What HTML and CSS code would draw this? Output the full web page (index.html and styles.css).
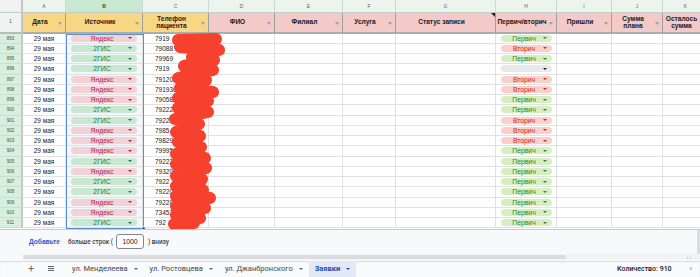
FILE: index.html
```html
<!DOCTYPE html>
<html lang="ru">
<head>
<meta charset="utf-8">
<link rel="stylesheet" href="styles.css">
</head>
<body>
<div class="app">
  <div class="sheet">
    <div class="row letters">
      <div class="c corner"></div>
      <div class="c">A</div><div class="c sel">B</div><div class="c">C</div><div class="c">D</div><div class="c">E</div><div class="c">F</div><div class="c">G</div><div class="c">H</div><div class="c">I</div><div class="c">J</div><div class="c">K</div>
    </div>
    <div class="row head">
      <div class="c rn">1</div>
      <div class="c y">Дата<i class="flt"></i></div>
      <div class="c y">Источник<i class="flt"></i></div>
      <div class="c y">Телефон<br>пациента<i class="flt"></i></div>
      <div class="c p">ФИО<i class="flt"></i></div>
      <div class="c p">Филиал<i class="flt"></i></div>
      <div class="c p">Услуга<i class="flt"></i></div>
      <div class="c p note">Статус записи</div>
      <div class="c p">Первич/вторич<i class="flt"></i></div>
      <div class="c p">Пришли<i class="flt"></i></div>
      <div class="c p">Сумма<br>плана<i class="flt"></i></div>
      <div class="c p">Осталось<br>сумма</div>
    </div>
    <div class="body">
      <div class="row d"><div class="c rn">893</div><div class="c">29 мая</div><div class="c b"><span class="chip ya">Яндекс</span></div><div class="c ph">7919</div><div class="c"></div><div class="c"></div><div class="c"></div><div class="c"></div><div class="c"><span class="chip pv">Первич</span></div><div class="c"></div><div class="c"></div><div class="c"></div></div>
      <div class="row d"><div class="c rn">894</div><div class="c">29 мая</div><div class="c b"><span class="chip gis">2ГИС</span></div><div class="c ph">79088</div><div class="c"></div><div class="c"></div><div class="c"></div><div class="c"></div><div class="c"><span class="chip vt">Вторич</span></div><div class="c"></div><div class="c"></div><div class="c"></div></div>
      <div class="row d"><div class="c rn">895</div><div class="c">29 мая</div><div class="c b"><span class="chip gis">2ГИС</span></div><div class="c ph">79969</div><div class="c"></div><div class="c"></div><div class="c"></div><div class="c"></div><div class="c"><span class="chip pv">Первич</span></div><div class="c"></div><div class="c"></div><div class="c"></div></div>
      <div class="row d"><div class="c rn">896</div><div class="c">29 мая</div><div class="c b"><span class="chip gis">2ГИС</span></div><div class="c ph">7919</div><div class="c"></div><div class="c"></div><div class="c"></div><div class="c"></div><div class="c"><span class="chip em"></span></div><div class="c"></div><div class="c"></div><div class="c"></div></div>
      <div class="row d"><div class="c rn">897</div><div class="c">29 мая</div><div class="c b"><span class="chip ya">Яндекс</span></div><div class="c ph">791207</div><div class="c"></div><div class="c"></div><div class="c"></div><div class="c"></div><div class="c"><span class="chip vt">Вторич</span></div><div class="c"></div><div class="c"></div><div class="c"></div></div>
      <div class="row d"><div class="c rn">898</div><div class="c">29 мая</div><div class="c b"><span class="chip ya">Яндекс</span></div><div class="c ph">791936</div><div class="c"></div><div class="c"></div><div class="c"></div><div class="c"></div><div class="c"><span class="chip vt">Вторич</span></div><div class="c"></div><div class="c"></div><div class="c"></div></div>
      <div class="row d"><div class="c rn">899</div><div class="c">29 мая</div><div class="c b"><span class="chip ya">Яндекс</span></div><div class="c ph">79058</div><div class="c"></div><div class="c"></div><div class="c"></div><div class="c"></div><div class="c"><span class="chip pv">Первич</span></div><div class="c"></div><div class="c"></div><div class="c"></div></div>
      <div class="row d"><div class="c rn">900</div><div class="c">29 мая</div><div class="c b"><span class="chip gis">2ГИС</span></div><div class="c ph">79222</div><div class="c"></div><div class="c"></div><div class="c"></div><div class="c"></div><div class="c"><span class="chip pv">Первич</span></div><div class="c"></div><div class="c"></div><div class="c"></div></div>
      <div class="row d"><div class="c rn">901</div><div class="c">29 мая</div><div class="c b"><span class="chip gis">2ГИС</span></div><div class="c ph">7922267</div><div class="c"></div><div class="c"></div><div class="c"></div><div class="c"></div><div class="c"><span class="chip vt">Вторич</span></div><div class="c"></div><div class="c"></div><div class="c"></div></div>
      <div class="row d"><div class="c rn">902</div><div class="c">29 мая</div><div class="c b"><span class="chip ya">Яндекс</span></div><div class="c ph">7985</div><div class="c"></div><div class="c"></div><div class="c"></div><div class="c"></div><div class="c"><span class="chip vt">Вторич</span></div><div class="c"></div><div class="c"></div><div class="c"></div></div>
      <div class="row d"><div class="c rn">903</div><div class="c">29 мая</div><div class="c b"><span class="chip ya">Яндекс</span></div><div class="c ph">798292</div><div class="c"></div><div class="c"></div><div class="c"></div><div class="c"></div><div class="c"><span class="chip vt">Вторич</span></div><div class="c"></div><div class="c"></div><div class="c"></div></div>
      <div class="row d"><div class="c rn">904</div><div class="c">29 мая</div><div class="c b"><span class="chip ya">Яндекс</span></div><div class="c ph">799954</div><div class="c"></div><div class="c"></div><div class="c"></div><div class="c"></div><div class="c"><span class="chip pv">Первич</span></div><div class="c"></div><div class="c"></div><div class="c"></div></div>
      <div class="row d"><div class="c rn">905</div><div class="c">29 мая</div><div class="c b"><span class="chip gis">2ГИС</span></div><div class="c ph">79222</div><div class="c"></div><div class="c"></div><div class="c"></div><div class="c"></div><div class="c"><span class="chip pv">Первич</span></div><div class="c"></div><div class="c"></div><div class="c"></div></div>
      <div class="row d"><div class="c rn">906</div><div class="c">29 мая</div><div class="c b"><span class="chip ya">Яндекс</span></div><div class="c ph">7932052</div><div class="c"></div><div class="c"></div><div class="c"></div><div class="c"></div><div class="c"><span class="chip pv">Первич</span></div><div class="c"></div><div class="c"></div><div class="c"></div></div>
      <div class="row d"><div class="c rn">907</div><div class="c">29 мая</div><div class="c b"><span class="chip gis">2ГИС</span></div><div class="c ph">7922</div><div class="c"></div><div class="c"></div><div class="c"></div><div class="c"></div><div class="c"><span class="chip pv">Первич</span></div><div class="c"></div><div class="c"></div><div class="c"></div></div>
      <div class="row d"><div class="c rn">908</div><div class="c">29 мая</div><div class="c b"><span class="chip gis">2ГИС</span></div><div class="c ph">792209</div><div class="c"></div><div class="c"></div><div class="c"></div><div class="c"></div><div class="c"><span class="chip pv">Первич</span></div><div class="c"></div><div class="c"></div><div class="c"></div></div>
      <div class="row d"><div class="c rn">909</div><div class="c">29 мая</div><div class="c b"><span class="chip ya">Яндекс</span></div><div class="c ph">792204</div><div class="c"></div><div class="c"></div><div class="c"></div><div class="c"></div><div class="c"><span class="chip pv">Первич</span></div><div class="c"></div><div class="c"></div><div class="c"></div></div>
      <div class="row d"><div class="c rn">910</div><div class="c">29 мая</div><div class="c b"><span class="chip ya">Яндекс</span></div><div class="c ph">734524</div><div class="c"></div><div class="c"></div><div class="c"></div><div class="c"></div><div class="c"><span class="chip pv">Первич</span></div><div class="c"></div><div class="c"></div><div class="c"></div></div>
      <div class="row d"><div class="c rn">911</div><div class="c">29 мая</div><div class="c b"><span class="chip gis">2ГИС</span></div><div class="c ph">792</div><div class="c"></div><div class="c"></div><div class="c"></div><div class="c"></div><div class="c"><span class="chip pv">Первич</span></div><div class="c"></div><div class="c"></div><div class="c"></div></div>
    </div>
    <div class="selection"></div>
    <div class="handle"></div>
    <svg class="scribble" width="700" height="240" viewBox="0 0 700 240">
      <polyline points="178,40 216,39 180,47 219,50 192,57 214,60 184,66 213,70 178,78 206,80 180,88 213,92 178,98 208,101 178,108 208,112 175,119 199,124 176,132 200,136 178,142 201,147 176,154 205,158 176,164 206,168 176,176 202,179 176,186 203,190 176,196 210,198 176,206 205,208 176,215 200,218 174,224 194,223" />
    </svg>
  </div>
  <div class="addrow">
    <span class="add">Добавьте</span>
    <span class="more">больше строк (</span>
    <span class="num">1000</span>
    <span class="more">) внизу</span>
    <span class="vbar"></span>
  </div>
  <div class="hscroll">
    <div class="track"><div class="thumb"></div></div>
    <div class="arrows">‹ ›</div>
  </div>
  <div class="tabs">
    <span class="tool plus">+</span>
    <span class="tool menu"><i></i><i></i><i></i></span>
    <span class="tab first">ул. Менделеева <b class="arr"></b></span>
    <span class="tab">ул. Ростовцева <b class="arr"></b></span>
    <span class="tab">ул. Джанбронского <b class="arr"></b></span>
    <span class="tab active">Заявки <b class="arr"></b></span>
    <span class="spacer"></span>
    <span class="count">Количество: 910</span>
    <span class="chev">‹</span>
  </div>
</div>
</body>
</html>
```

FILE: styles.css
```css
* { box-sizing: border-box; }
html, body { margin: 0; padding: 0; }
body {
  width: 700px;
  height: 277px;
  overflow: hidden;
  background: #fff;
  font-family: "Liberation Sans", Arial, sans-serif;
  color: #202124;
}
.app { width: 700px; height: 277px; display: flex; flex-direction: column; overflow: hidden; }

.sheet { position: relative; height: 228.5px; overflow: hidden; flex: none; }
.row {
  display: grid;
  grid-template-columns: 23px 43px 77px 66px 66px 68px 53px 100px 61px 55px 51px 46px;
  width: 709px;
}
.c {
  border-right: 1px solid #e1e1e1;
  border-bottom: 1px solid #e1e1e1;
  display: flex;
  align-items: center;
  justify-content: center;
  overflow: hidden;
  white-space: nowrap;
  position: relative;
}

.letters { height: 13px; background: #ebf5ee; font-size: 5px; color: #5f6368; }
.letters .c { border-right: 1px solid #cfd8d2; border-bottom: 1px solid #c4ccc6; }
.letters .corner { background: #f1f3f2; border-right: 2px solid #c4c7c5; }
.letters .sel { background: #c9e8d2; color: #1e5a33; font-weight: bold; }

.head { height: 20.5px; font-size: 6.6px; font-weight: bold; line-height: 1.15; text-align: center; }
.head .c { border-bottom: 2px solid #a9aeac; border-right: 1px solid #9da19f; padding-right: 8px; white-space: normal; }
.head .rn { background: #f1f3f2; font-weight: normal; font-size: 5px; color: #5f6368; padding-right: 0; border-right: 2px solid #c4c7c5; border-bottom: 2px solid #b8bdba; }
.head .y { background: #f8d784; }
.head .p { background: #f3cac8; }
.head .note::after {
  content: "";
  position: absolute;
  right: 0; top: 0;
  border-top: 4px solid #202124;
  border-left: 4px solid transparent;
}
.flt {
  position: absolute;
  right: 3px;
  top: 8.5px;
  width: 0; height: 0;
  border-left: 2.5px solid transparent;
  border-right: 2.5px solid transparent;
  border-top: 3px solid #9aa0a6;
}

.d { height: 10.25px; font-size: 6.5px; }
.d .rn { background: #d7efde; font-size: 4.6px; color: #3c5a45; border-right: 2px solid #c4c7c5; border-bottom: 1px solid #c9e0cf; }
.d .b { background: #f3f7fc; }
.d .ph { justify-content: flex-start; padding-left: 12px; }

.chip {
  width: 51px;
  height: 7px;
  border-radius: 4px;
  font-size: 6.8px;
  display: flex;
  align-items: center;
  justify-content: center;
  position: relative;
  padding-right: 4px;
}
.chip::after {
  content: "";
  position: absolute;
  right: 5px;
  top: 2.5px;
  border-left: 2px solid transparent;
  border-right: 2px solid transparent;
  border-top: 2.2px solid currentColor;
}
.b .chip { width: 66px; }
.ya { background: #f1d2d7; color: #b3263f; }
.gis { background: #c8e8cf; color: #1f7f3a; }
.pv { background: #d6efc1; color: #2f8a2f; }
.vt { background: #fbcfca; color: #cc2b22; }
.em { background: #e8e9ea; color: #202124; }

.selection {
  position: absolute;
  left: 66px;
  top: 33.5px;
  width: 77.5px;
  height: 195px;
  border: 1px solid #5b8fd9;
  pointer-events: none;
}
.handle {
  position: absolute;
  left: 141px;
  top: 226px;
  width: 5px;
  height: 5px;
  border-radius: 50%;
  background: #1a5fd0;
  border: 1px solid #fff;
}
.scribble { position: absolute; left: 0; top: 0; }
.scribble polyline {
  fill: none;
  stroke: #f6412f;
  stroke-width: 12;
  stroke-linecap: round;
  stroke-linejoin: round;
}

.addrow {
  height: 25px;
  flex: none;
  background: #f8f9fa;
  border-top: 1px solid #c6cac8;
  display: flex;
  align-items: center;
  padding-left: 29px;
  font-size: 6.3px;
  color: #3c4043;
}
.add { color: #1a5fc8; font-weight: bold; margin-right: 8px; font-size: 6.6px; }
.more { font-family: Roboto, "Noto Sans", sans-serif; font-weight: 500; }
.num {
  margin: 0 4px 0 3px;
  width: 28px;
  height: 15px;
  border: 1px solid #80868b;
  border-radius: 3px;
  background: #fff;
  display: flex;
  align-items: center;
  justify-content: center;
  font-size: 6.8px;
  color: #202124;
}
.vbar { margin-left: auto; width: 3px; height: 24px; background: #dadce0; border-radius: 1px; }

.hscroll {
  height: 7px;
  flex: none;
  display: flex;
  align-items: center;
  background: #f8f9fa;
  padding-left: 23px;
}
.track { flex: 1; height: 6px; display: flex; align-items: center; background: #f1f3f4; }
.thumb { width: 543px; height: 4px; border-radius: 2px; background: #dadce0; }
.arrows { width: 22px; font-size: 5px; color: #9aa0a6; text-align: center; background: #f1f3f4; height: 6px; line-height: 6px; }

.tabs {
  flex: 1;
  display: flex;
  align-items: stretch;
  background: #f9fafb;
  box-shadow: inset 0 1px 1px #d8dadc;
  font-family: Roboto, "Noto Sans", sans-serif;
  font-size: 7.5px;
  color: #444746;
  padding-left: 26px;
}
.tool { display: flex; align-items: center; justify-content: center; }
.plus { width: 10px; font-size: 10px; color: #5f6368; }
.menu { width: 10px; margin-left: 10px; flex-direction: column; gap: 1.2px; }
.menu i { display: block; width: 6px; height: 1px; background: #5f6368; }
.tab { display: flex; align-items: center; padding: 0 6px; }
.first { margin-left: 10px; }
.arr {
  margin-left: 6px;
  border-left: 2px solid transparent;
  border-right: 2px solid transparent;
  border-top: 2.2px solid #5f6368;
}
.active { background: #e1e9f7; color: #1b4fb8; font-weight: bold; margin-left: 0; }
.active .arr { border-top-color: #1b4fb8; }
.spacer { flex: 1; }
.count { display: flex; align-items: center; font-weight: 500; color: #202124; font-size: 7px; }
.chev { display: flex; align-items: center; margin: 0 8px 0 18px; color: #5f6368; font-size: 8px; }
```
